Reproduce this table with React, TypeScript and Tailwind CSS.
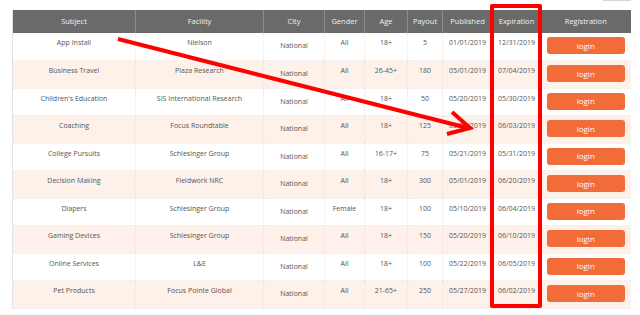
import React from "react";

type Study = {
  subject: string;
  facility: string;
  gender: string;
  age: string;
  payout: string;
  published: string;
  expiration: string;
};

const STUDIES: Study[] = [
  { subject: "App Install", facility: "Nielson", gender: "All", age: "18+", payout: "5", published: "01/01/2019", expiration: "12/31/2019" },
  { subject: "Business Travel", facility: "Plaza Research", gender: "All", age: "26-45+", payout: "180", published: "05/01/2019", expiration: "07/04/2019" },
  { subject: "Children's Education", facility: "SIS International Research", gender: "All", age: "18+", payout: "50", published: "05/20/2019", expiration: "05/30/2019" },
  { subject: "Coaching", facility: "Focus Roundtable", gender: "All", age: "18+", payout: "125", published: "05/30/2019", expiration: "06/03/2019" },
  { subject: "College Pursuits", facility: "Schlesinger Group", gender: "All", age: "16-17+", payout: "75", published: "05/21/2019", expiration: "05/31/2019" },
  { subject: "Decision Making", facility: "Fieldwork NRC", gender: "All", age: "18+", payout: "300", published: "05/01/2019", expiration: "06/20/2019" },
  { subject: "Diapers", facility: "Schlesinger Group", gender: "Female", age: "18+", payout: "100", published: "05/10/2019", expiration: "06/04/2019" },
  { subject: "Gaming Devices", facility: "Schlesinger Group", gender: "All", age: "18+", payout: "150", published: "05/20/2019", expiration: "06/10/2019" },
  { subject: "Online Services", facility: "L&E", gender: "All", age: "18+", payout: "100", published: "05/22/2019", expiration: "06/05/2019" },
  { subject: "Pet Products", facility: "Focus Pointe Global", gender: "All", age: "21-65+", payout: "250", published: "05/27/2019", expiration: "06/02/2019" },
];

const HEADERS = ["Subject", "Facility", "City", "Gender", "Age", "Payout", "Published", "Expiration", "Registration"];
const WIDTHS = [123, 128, 61, 40, 43, 35, 50, 48, 90];

function Cell({ children, low }: { children: React.ReactNode; low?: boolean }) {
  return (
    <td
      className={
        "align-top text-center whitespace-nowrap border-r border-dotted border-[#ece4df] last:border-r-0 " +
        (low ? "pt-[8px]" : "pt-[5px]")
      }
    >
      {children}
    </td>
  );
}

export default function App() {
  return (
    <div
      className="relative w-[640px] h-[315px] bg-white overflow-hidden"
      style={{ fontFamily: '"Open Sans", "Noto Sans", sans-serif' }}
    >
      <div className="absolute left-[603px] top-0 w-[28px] h-[1px] bg-[#d6d6d6]" />
      <div className="pl-[12px] pt-[10px]">
        <table className="table-fixed border-collapse w-[618px] text-[7px] text-[#555] border-l border-[#e4e4e4]">
          <colgroup>
            {WIDTHS.map((w, i) => (
              <col key={i} style={{ width: w }} />
            ))}
          </colgroup>
          <thead>
            <tr className="h-[23px] bg-[#6a6a6a]">
              {HEADERS.map((h) => (
                <th
                  key={h}
                  className="font-normal text-[7.5px] text-[#f2f2f2] text-center border-r border-[#8a8a8a] last:border-r-0"
                >
                  {h}
                </th>
              ))}
            </tr>
          </thead>
          <tbody>
            {STUDIES.map((s, i) => (
              <tr
                key={s.subject}
                className={
                  "h-[27.5px] border-b border-dotted border-[#ebe5e1] " +
                  (i % 2 === 1 ? "bg-[#fdf1ea]" : "bg-white")
                }
              >
                <Cell>{s.subject}</Cell>
                <Cell>{s.facility}</Cell>
                <Cell low>National</Cell>
                <Cell>{s.gender}</Cell>
                <Cell>{s.age}</Cell>
                <Cell>{s.payout}</Cell>
                <Cell>{s.published}</Cell>
                <Cell>{s.expiration}</Cell>
                <td className="align-top pt-[4px]">
                  <div className="mx-auto w-[78px] h-[17px] rounded-[3px] bg-[#f26c3a] text-white text-[8px] flex items-center justify-center">
                    login
                  </div>
                </td>
              </tr>
            ))}
          </tbody>
        </table>
      </div>

      {/* annotation: box around the expiration column */}
      <div className="absolute left-[490px] top-[4px] w-[52px] h-[304px] border-[4px] border-[#ff0000] rounded-[2px]" />

      {/* annotation: arrow */}
      <svg className="absolute inset-0" width="640" height="315" viewBox="0 0 640 315">
        <g stroke="#ff0000" strokeWidth="4" strokeLinecap="butt" fill="none">
          <line x1="118" y1="39" x2="468" y2="128" />
          <polyline points="452,112 470,128 447,134" strokeLinejoin="miter" />
        </g>
      </svg>
    </div>
  );
}
